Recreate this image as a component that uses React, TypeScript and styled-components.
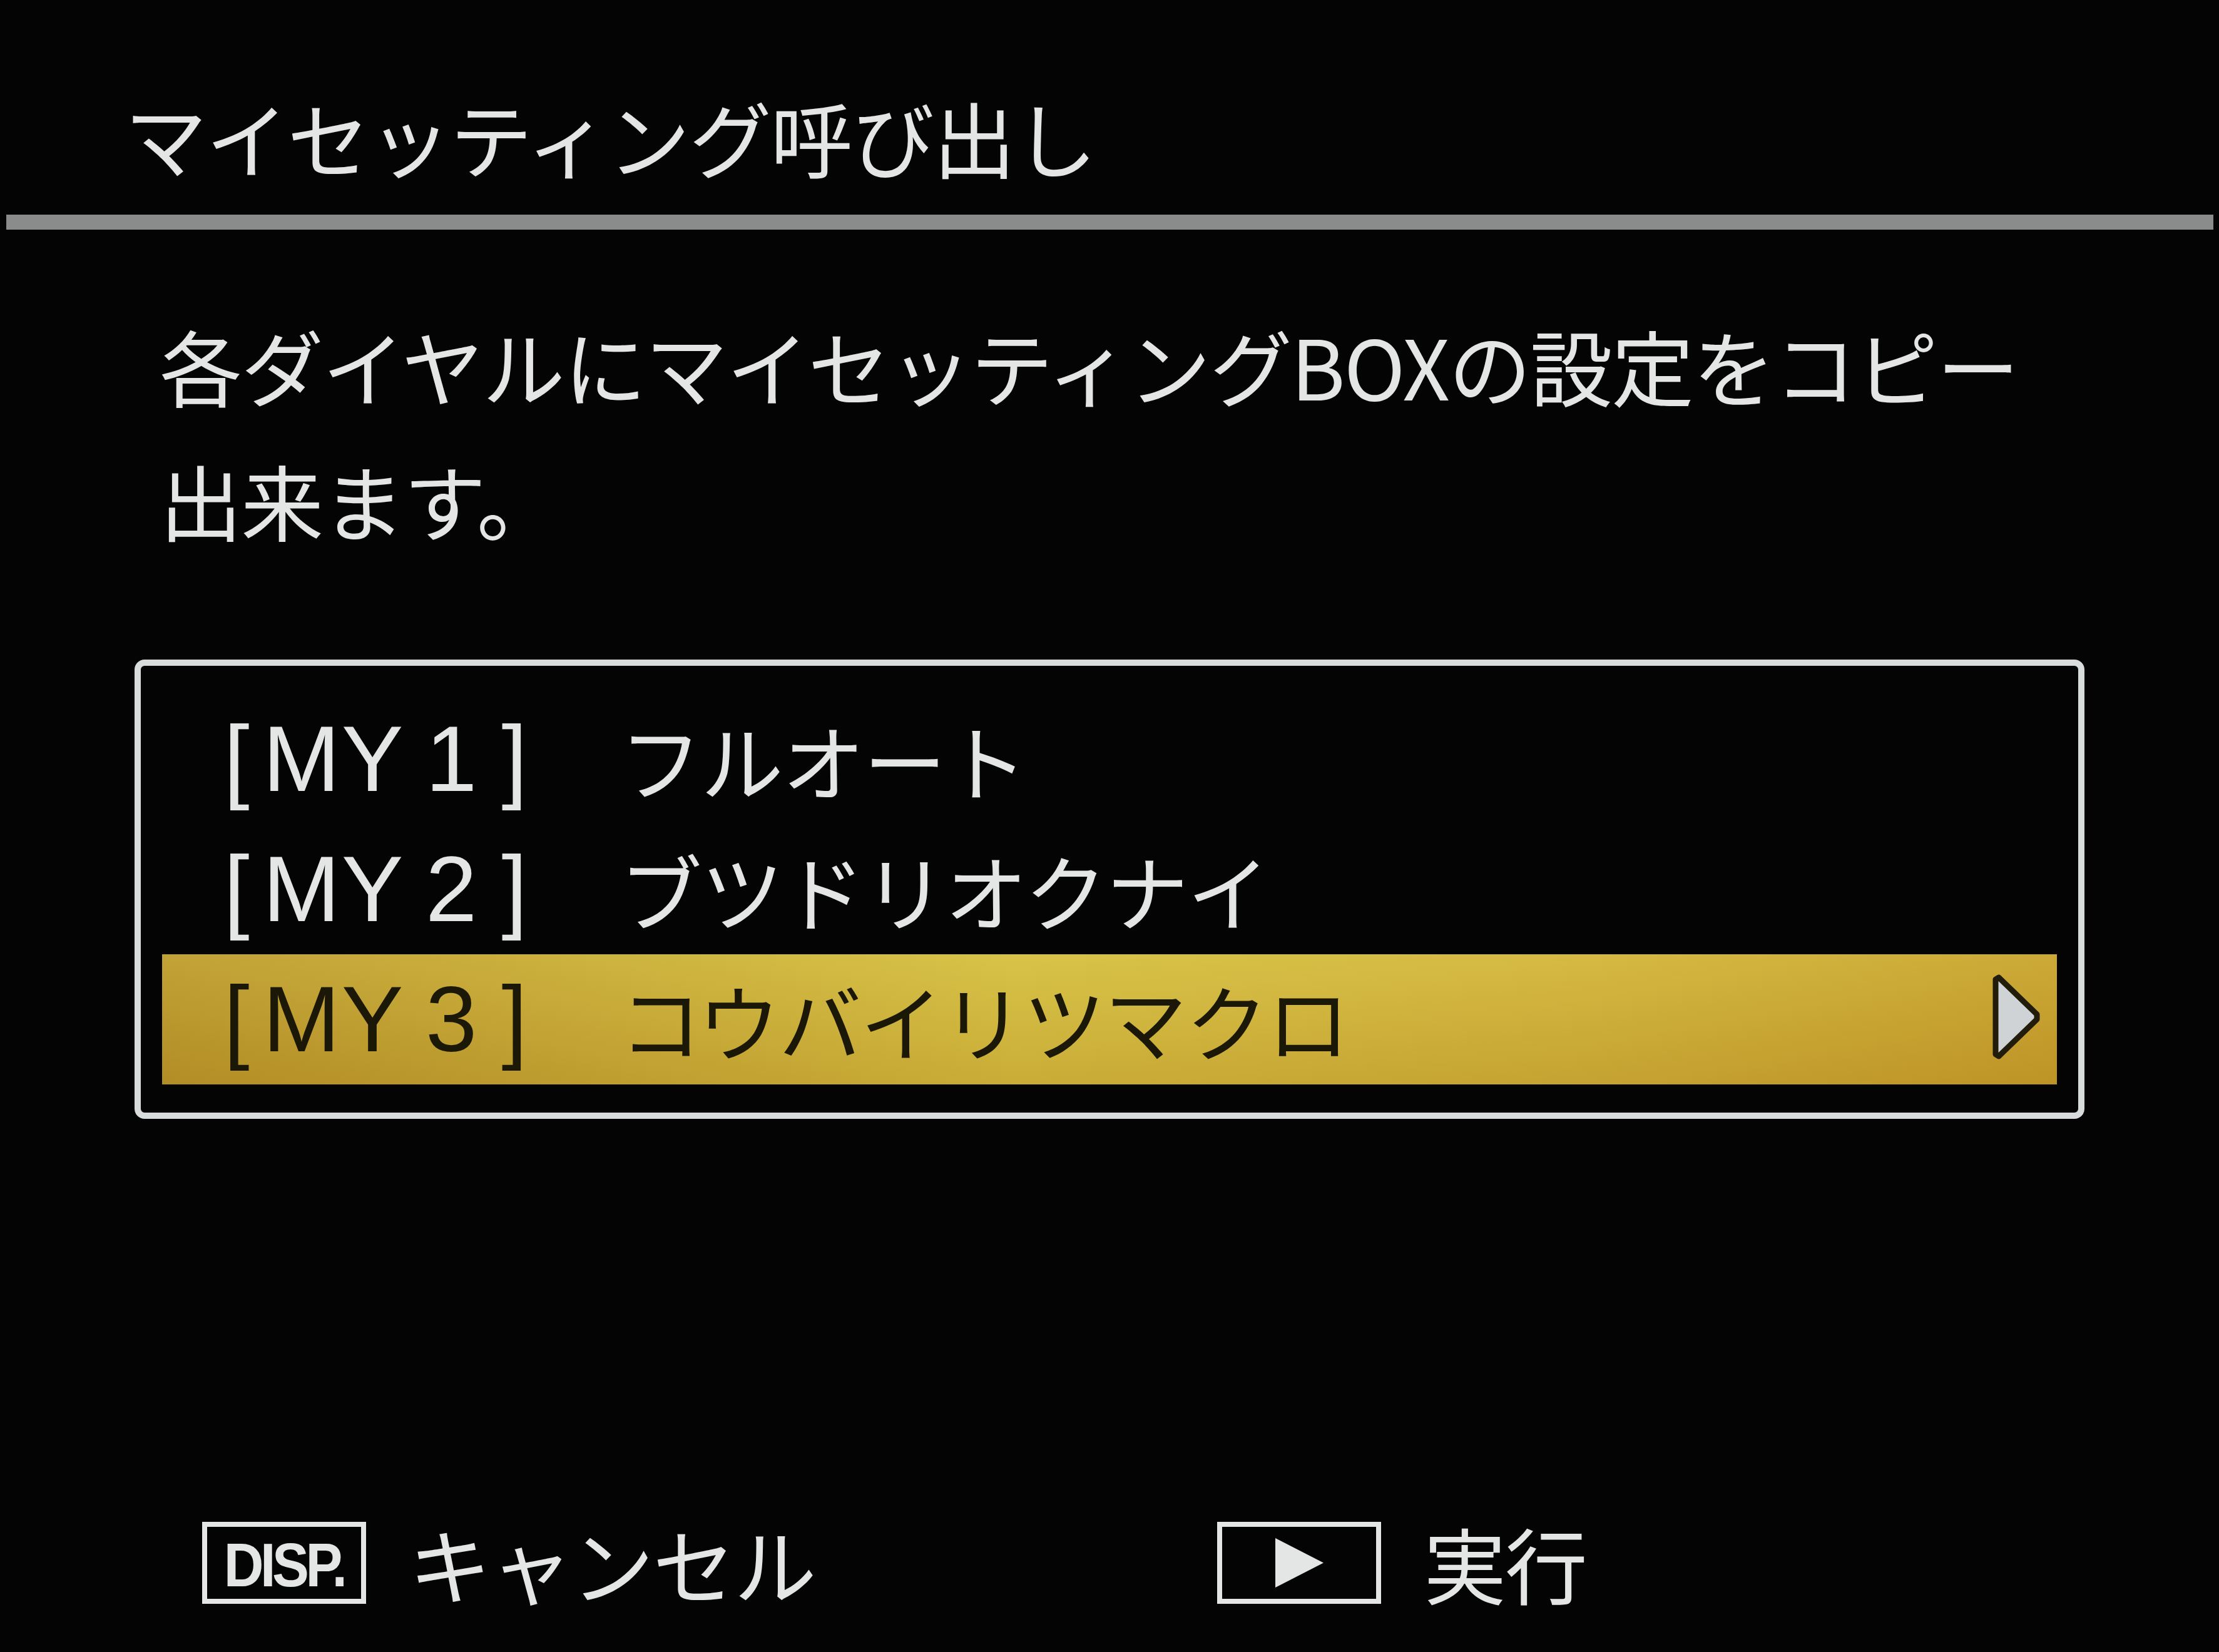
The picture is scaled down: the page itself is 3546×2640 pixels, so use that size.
import React from "react";
import styled, { createGlobalStyle } from "styled-components";

const GlobalStyle = createGlobalStyle`
  html, body {
    margin: 0;
    padding: 0;
    background: #040404;
  }
  body {
    font-family: "Noto Sans CJK JP", "Noto Sans", sans-serif;
    color: #e4e6e6;
  }
`;

const rows = [
  { num: "1", name: "フルオート" },
  { num: "2", name: "ブツドリオクナイ" },
  { num: "3", name: "コウバイリツマクロ", selected: true },
];

// widths of the half-width cells of "[MY n]"
const labelCells = [84, 90, 170, 70, 144];

function Label({ num }: { num: string }) {
  const chars = ["[", "M", "Y", num, "]"];
  return (
    <LabelWrap>
      {chars.map((c, i) => (
        <LabelCell key={i} $w={labelCells[i]}>
          {c}
        </LabelCell>
      ))}
    </LabelWrap>
  );
}

export default function App() {
  return (
    <>
      <GlobalStyle />
      <Screen>
        <Title>マイセッティング呼び出し</Title>
        <Divider />
        <Message>
          各ダイヤルにマイセッティングBOXの設定をコピー
          <br />
          出来ます。
        </Message>
        <ListBox>
          {rows.map((r) => (
            <Row key={r.num} $selected={!!r.selected}>
              <Label num={r.num} />
              <Name>{r.name}</Name>
              {r.selected && (
                <Chevron viewBox="0 0 80 136" width="80" height="136">
                  <path
                    d="M7 8 L12 5 L73 64 L73 72 L12 131 L7 128 Z"
                    fill="#cfd3d6"
                    stroke="#221c0a"
                    strokeWidth="9"
                    strokeLinejoin="round"
                  />
                </Chevron>
              )}
            </Row>
          ))}
        </ListBox>
        <Footer>
          <FooterItem>
            <KeyBox>
              <DispText>DISP.</DispText>
            </KeyBox>
            <FooterLabel>キャンセル</FooterLabel>
          </FooterItem>
          <FooterItem>
            <KeyBox>
              <svg viewBox="0 0 77 79" width="77" height="79">
                <polygon points="0,0 77,39.5 0,79" fill="#e4e6e6" />
              </svg>
            </KeyBox>
            <FooterLabel>実行</FooterLabel>
          </FooterItem>
        </Footer>
      </Screen>
    </>
  );
}

const Screen = styled.div`
  width: 3546px;
  height: 2640px;
  box-sizing: border-box;
  padding: 152px 0 77px 0;
  display: flex;
  flex-direction: column;
  overflow: hidden;
`;

const Title = styled.div`
  margin-left: 199px;
  font-size: 132px;
  line-height: 132px;
  letter-spacing: -2px;
  white-space: nowrap;
`;

const Divider = styled.div`
  margin: 59px 9px 0 10px;
  height: 24px;
  background: #8a8c8c;
`;

const Message = styled.div`
  margin: 108px 0 0 255px;
  font-size: 132px;
  line-height: 215px;
  letter-spacing: -2px;
  white-space: nowrap;
`;

const ListBox = styled.div`
  margin: 149px 0 0 215px;
  width: 3116px;
  box-sizing: border-box;
  border: 10px solid #d8dcdc;
  border-radius: 16px;
  padding: 45px 34px;
  display: flex;
  flex-direction: column;
`;

const Row = styled.div<{ $selected: boolean }>`
  height: 208px;
  display: flex;
  align-items: center;
  padding: 0 25px 0 77px;
  color: ${(p) => (p.$selected ? "#1c1808" : "#e4e6e6")};
  background: ${(p) =>
    p.$selected
      ? "linear-gradient(to bottom, rgba(255,240,130,0.12), rgba(140,70,0,0.14)), linear-gradient(to right, #b9982c, #d3bd40 45%, #cfb23a 75%, #c5a02c)"
      : "transparent"};
`;

const LabelWrap = styled.div`
  display: flex;
  align-items: center;
  margin-right: 96px;
  font-family: "Liberation Sans", "Noto Sans", sans-serif;
  font-size: 148px;
  line-height: 1;
`;

const LabelCell = styled.span<{ $w: number }>`
  width: ${(p) => p.$w}px;
  text-align: center;
`;

const Name = styled.div`
  flex: 1;
  font-size: 132px;
  line-height: 1;
  letter-spacing: -2px;
  white-space: nowrap;
`;

const Chevron = styled.svg`
  flex-shrink: 0;
  margin-top: -8px;
`;

const Footer = styled.div`
  margin-top: auto;
  display: grid;
  grid-template-columns: 1622px auto;
  padding-left: 323px;
`;

const FooterItem = styled.div`
  display: flex;
  align-items: center;
  gap: 68px;
`;

const KeyBox = styled.div`
  width: 262px;
  height: 131px;
  box-sizing: border-box;
  border: 8px solid #e4e6e6;
  display: flex;
  align-items: center;
  justify-content: center;
`;

const DispText = styled.span`
  font-family: "Liberation Sans", sans-serif;
  font-weight: 700;
  font-size: 98px;
  line-height: 1;
  letter-spacing: -6px;
  transform: scaleX(0.9);
  margin-top: 8px;
`;

const FooterLabel = styled.span`
  font-size: 132px;
  line-height: 1;
  letter-spacing: -2px;
  white-space: nowrap;
`;
